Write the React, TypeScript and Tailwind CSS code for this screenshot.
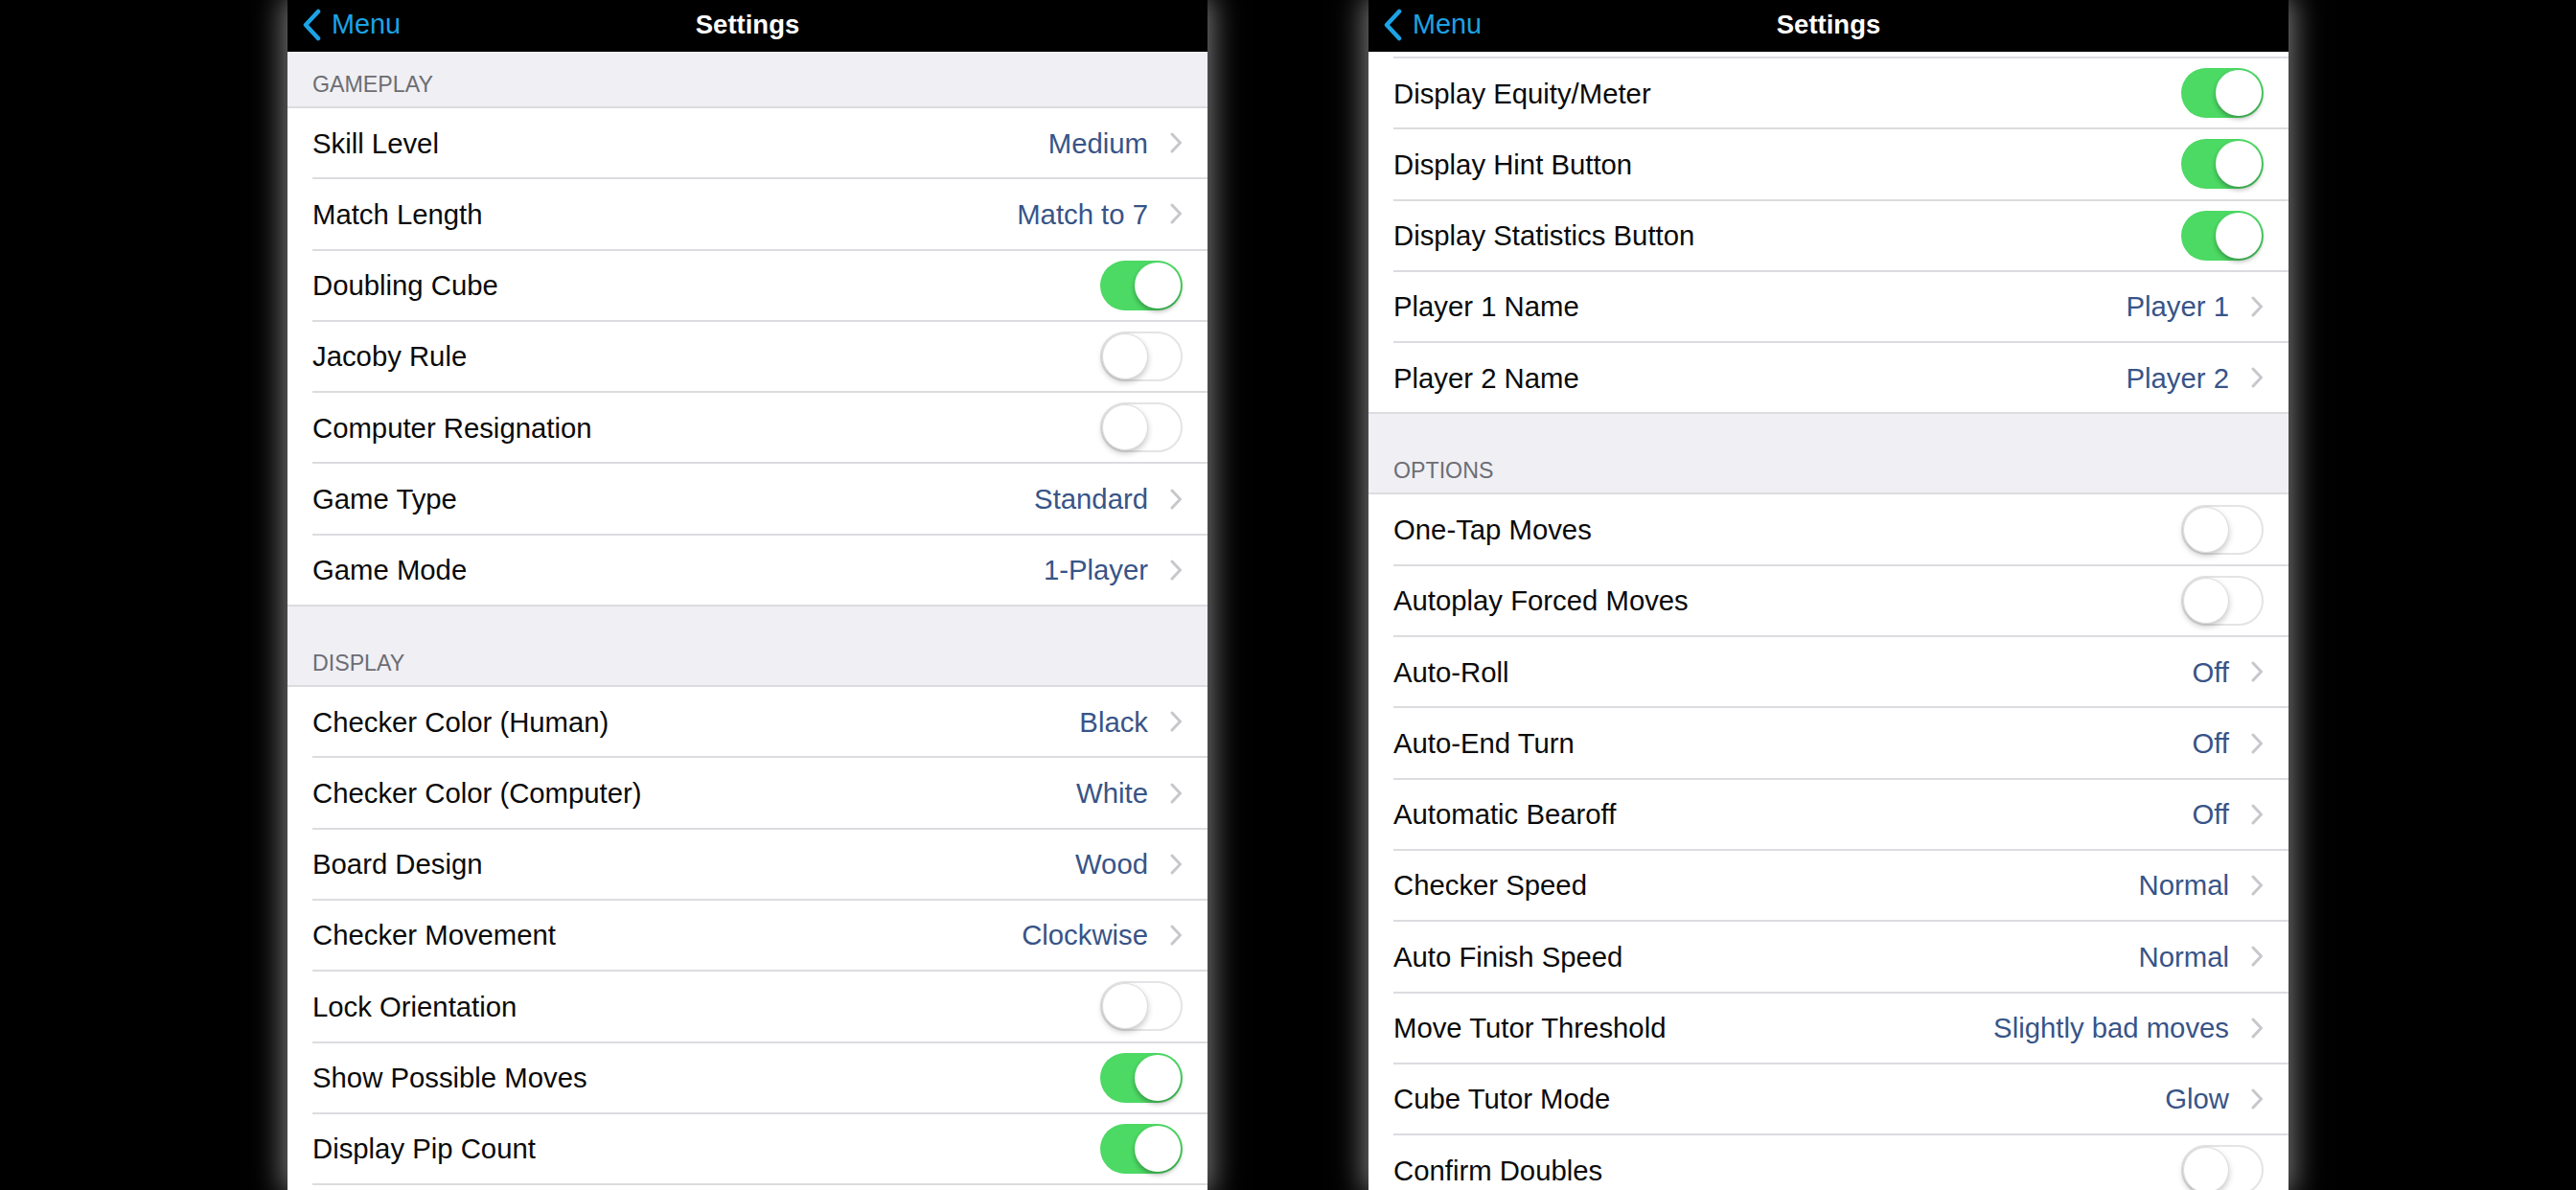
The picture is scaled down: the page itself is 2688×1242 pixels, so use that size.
import React from "react";

const FONT = { fontFamily: '"Liberation Sans", Arial, Helvetica, sans-serif' };

type RowDef = { label: string; value?: string; toggle?: boolean };

function Chevron() {
  return (
    <svg width="13" height="22" viewBox="0 0 13 22" className="ml-[23px] shrink-0">
      <path d="M2 2 L10.5 11 L2 20" fill="none" stroke="#c7c7cc" strokeWidth="3" strokeLinecap="round" strokeLinejoin="round" />
    </svg>
  );
}

function Toggle({ on }: { on: boolean }) {
  if (on) {
    return (
      <div className="w-[86px] h-[52px] rounded-full bg-[#4cd964] p-[2px] flex justify-end shrink-0">
        <div className="w-[48px] h-[48px] rounded-full bg-white shadow-[0_3px_5px_rgba(0,0,0,0.3)]" />
      </div>
    );
  }
  return (
    <div className="w-[86px] h-[52px] rounded-full bg-white border-2 border-[#e4e4e7] flex justify-start shrink-0">
      <div className="w-[48px] h-[48px] rounded-full bg-white border border-[#dcdcdc] shadow-[0_3px_6px_rgba(0,0,0,0.22)]" />
    </div>
  );
}

function Row({ row, last }: { row: RowDef; last?: boolean }) {
  return (
    <div className={`bg-white pl-[26px] shrink-0 ${last ? "border-b-2 border-[#dcdce0]" : ""}`}>
      <div
        className={`flex items-center pr-[26px] ${last ? "h-[72.3px]" : "h-[74.3px] border-b-2 border-[#dcdce0]"}`}
      >
        <span className="flex-1 text-[29.3px] text-[#0a0a0a] leading-none whitespace-nowrap">{row.label}</span>
        {row.value !== undefined && (
          <>
            <span className="text-[29.3px] text-[#385487] leading-none whitespace-nowrap">{row.value}</span>
            <Chevron />
          </>
        )}
        {row.toggle !== undefined && <Toggle on={row.toggle} />}
      </div>
    </div>
  );
}

function Header({ title, tall }: { title: string; tall?: boolean }) {
  return (
    <div
      className={`bg-[#efeff4] flex items-end px-[26px] pb-[10.5px] border-b-2 border-[#dcdce0] shrink-0 ${
        tall ? "h-[84px]" : "h-[59px]"
      }`}
    >
      <span className="text-[23.2px] leading-[26px] text-[#6d6d72] uppercase">{title}</span>
    </div>
  );
}

function NavBar() {
  return (
    <div className="h-[54px] bg-black grid grid-cols-[1fr_auto_1fr] items-center pb-[3px] shrink-0">
      <div className="flex items-center pl-[14px]">
        <svg width="22" height="34" viewBox="0 0 22 34" className="shrink-0">
          <path d="M18 3 L5 17 L18 31" fill="none" stroke="#1ca3e6" strokeWidth="4.5" strokeLinecap="round" strokeLinejoin="round" />
        </svg>
        <span className="ml-[10px] text-[28.8px] leading-none text-[#1ca3e6]">Menu</span>
      </div>
      <span className="text-[27.5px] leading-none font-semibold text-white">Settings</span>
      <div />
    </div>
  );
}

function Section({ rows }: { rows: RowDef[] }) {
  return (
    <>
      {rows.map((r, i) => (
        <Row key={r.label} row={r} last={i === rows.length - 1} />
      ))}
    </>
  );
}

const gameplay: RowDef[] = [
  { label: "Skill Level", value: "Medium" },
  { label: "Match Length", value: "Match to 7" },
  { label: "Doubling Cube", toggle: true },
  { label: "Jacoby Rule", toggle: false },
  { label: "Computer Resignation", toggle: false },
  { label: "Game Type", value: "Standard" },
  { label: "Game Mode", value: "1-Player" },
];

const display: RowDef[] = [
  { label: "Checker Color (Human)", value: "Black" },
  { label: "Checker Color (Computer)", value: "White" },
  { label: "Board Design", value: "Wood" },
  { label: "Checker Movement", value: "Clockwise" },
  { label: "Lock Orientation", toggle: false },
  { label: "Show Possible Moves", toggle: true },
  { label: "Display Pip Count", toggle: true },
];

const displayRight: RowDef[] = [
  { label: "Display Equity/Meter", toggle: true },
  { label: "Display Hint Button", toggle: true },
  { label: "Display Statistics Button", toggle: true },
  { label: "Player 1 Name", value: "Player 1" },
  { label: "Player 2 Name", value: "Player 2" },
];

const options: RowDef[] = [
  { label: "One-Tap Moves", toggle: false },
  { label: "Autoplay Forced Moves", toggle: false },
  { label: "Auto-Roll", value: "Off" },
  { label: "Auto-End Turn", value: "Off" },
  { label: "Automatic Bearoff", value: "Off" },
  { label: "Checker Speed", value: "Normal" },
  { label: "Auto Finish Speed", value: "Normal" },
  { label: "Move Tutor Threshold", value: "Slightly bad moves" },
  { label: "Cube Tutor Mode", value: "Glow" },
  { label: "Confirm Doubles", toggle: false },
];

export default function App() {
  return (
    <div
      className="w-[2688px] h-[1242px] bg-black flex justify-center gap-[168px] overflow-hidden"
      style={FONT}
    >
      <div className="w-[960px] h-full flex flex-col overflow-hidden bg-white shadow-[0_0_30px_4px_rgba(255,255,255,0.5)]">
        <NavBar />
        <div className="flex flex-col overflow-hidden">
          <Header title="Gameplay" />
          <Section rows={gameplay} />
          <Header title="Display" tall />
          {display.map((r) => (
            <Row key={r.label} row={r} />
          ))}
        </div>
      </div>
      <div className="w-[960px] h-full flex flex-col overflow-hidden bg-white shadow-[0_0_30px_4px_rgba(255,255,255,0.5)]">
        <NavBar />
        <div className="flex flex-col overflow-hidden">
          <div className="bg-white pl-[26px] shrink-0">
            <div className="h-[7px] border-b-2 border-[#dcdce0]" />
          </div>
          <Section rows={displayRight} />
          <Header title="Options" tall />
          {options.map((r) => (
            <Row key={r.label} row={r} />
          ))}
        </div>
      </div>
    </div>
  );
}
